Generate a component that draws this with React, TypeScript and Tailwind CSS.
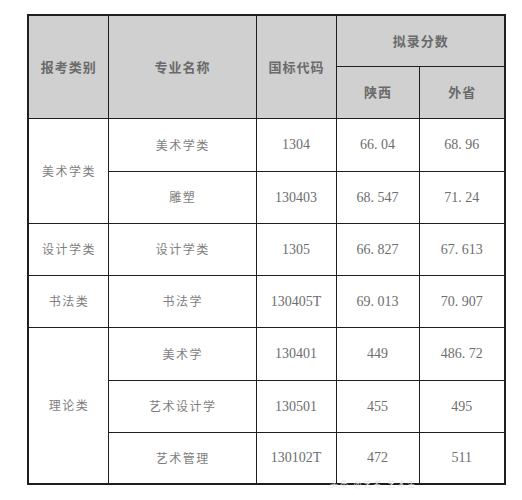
import React from "react";

function Num({ v }: { v: string }) {
  const i = v.indexOf(".");
  if (i < 0) return <span>{v}</span>;
  return (
    <span>
      {v.slice(0, i)}
      <span className="mr-[3.5px]">.</span>
      {v.slice(i + 1)}
    </span>
  );
}

const H =
  "border border-[#1e1e1e] bg-[#d0d0d0] text-center align-middle text-[13px] font-bold text-[#6a6a6a] tracking-[1px] pl-[1px] font-['Noto_Sans_CJK_SC',sans-serif]";
const C =
  "border border-[#1e1e1e] bg-white text-center align-middle text-[12px] text-[#7e7e7e] tracking-[1.5px] pl-[1.5px] font-['Noto_Sans_CJK_SC',sans-serif]";
const N =
  "border border-[#1e1e1e] bg-white text-center align-middle text-[14px] text-[#6e6e6e] font-['Liberation_Serif',serif]";

type Row = { cat?: string; span?: number; name: string; code: string; a: string; b: string; h: string };

const rows: Row[] = [
  { cat: "美术学类", span: 2, name: "美术学类", code: "1304", a: "66.04", b: "68.96", h: "h-[53px]" },
  { name: "雕塑", code: "130403", a: "68.547", b: "71.24", h: "h-[52px]" },
  { cat: "设计学类", span: 1, name: "设计学类", code: "1305", a: "66.827", b: "67.613", h: "h-[52px]" },
  { cat: "书法类", span: 1, name: "书法学", code: "130405T", a: "69.013", b: "70.907", h: "h-[52px]" },
  { cat: "理论类", span: 3, name: "美术学", code: "130401", a: "449", b: "486.72", h: "h-[53px]" },
  { name: "艺术设计学", code: "130501", a: "455", b: "495", h: "h-[52px]" },
  { name: "艺术管理", code: "130102T", a: "472", b: "511", h: "h-[52px]" },
];

export default function App() {
  return (
    <div className="relative w-[522px] h-[500px] bg-white pt-[14px] pl-[27px]">
      <table className="border-collapse table-fixed w-[477px] border-2 border-[#1e1e1e]">
        <colgroup>
          <col className="w-[80px]" />
          <col className="w-[148px]" />
          <col className="w-[80px]" />
          <col className="w-[83px]" />
          <col className="w-[86px]" />
        </colgroup>
        <thead>
          <tr className="h-[51px]">
            <th rowSpan={2} className={H}>报考类别</th>
            <th rowSpan={2} className={H}>专业名称</th>
            <th rowSpan={2} className={H}>国标代码</th>
            <th colSpan={2} className={H}>拟录分数</th>
          </tr>
          <tr className="h-[52px]">
            <th className={H}>陕西</th>
            <th className={H}>外省</th>
          </tr>
        </thead>
        <tbody>
          {rows.map((r, i) => (
            <tr key={i} className={r.h}>
              {r.cat && (
                <td rowSpan={r.span} className={C}>
                  {r.cat}
                </td>
              )}
              <td className={C}>{r.name}</td>
              <td className={N}>{r.code}</td>
              <td className={N}>
                <Num v={r.a} />
              </td>
              <td className={N}>
                <Num v={r.b} />
              </td>
            </tr>
          ))}
        </tbody>
      </table>
      <div className="absolute left-[330px] top-[480px] text-[8px] leading-[8px] text-[#e8e8e8] tracking-[2px] font-['Noto_Sans_CJK_SC',sans-serif]">
        头条 @艺考 艺术生
      </div>
    </div>
  );
}
